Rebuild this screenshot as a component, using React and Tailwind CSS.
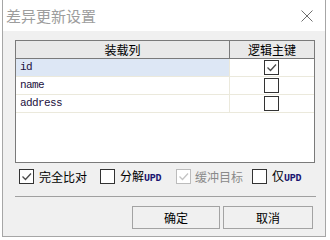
import React from "react";

const cjk = { fontFamily: '"Microsoft YaHei","Noto Sans CJK SC",sans-serif' };
const mono = { fontFamily: '"Liberation Mono","DejaVu Sans Mono",monospace' };

function Check({ color = "#4a4a4a" }) {
  return (
    <svg width="13" height="13" viewBox="0 0 13 13" className="block">
      <polyline points="2.5,6.5 5.5,9.5 11,3.5" fill="none" stroke={color} strokeWidth="1.3" />
    </svg>
  );
}

function Box({ checked, disabled, bg = "bg-white" }) {
  return (
    <div
      className={
        "w-[15px] h-[15px] border flex items-center justify-center shrink-0 " +
        (disabled ? "border-[#bcbcbc] " : "border-[#333333] ") +
        bg
      }
    >
      {checked && <Check color={disabled ? "#c4c4c4" : "#4a4a4a"} />}
    </div>
  );
}

function Row({ name, checked, selected }) {
  return (
    <div className="h-[18px] flex border-b border-[#ebe9dc]">
      <div
        className={
          "w-[214px] border-r border-[#ebe9dc] pl-[4px] flex items-center text-[11px] tracking-[-0.6px] text-[#1c1040] " +
          (selected ? "bg-[#dde7f5]" : "bg-white")
        }
        style={mono}
      >
        {name}
      </div>
      <div className="flex-1 flex items-center justify-center pr-[1px]">
        <Box checked={checked} />
      </div>
    </div>
  );
}

function Upd() {
  return (
    <span className="text-[10px] font-bold text-[#1a1470] tracking-[-0.2px] align-baseline" style={mono}>
      UPD
    </span>
  );
}

export default function App() {
  return (
    <div className="w-[330px] h-[240px] bg-white" style={cjk}>
      <div className="ml-[2px] w-[324px] h-[237px] border-x border-b border-[#a6a6a6] flex flex-col">
        <div className="h-[31px] bg-white flex items-center pl-[3px] shrink-0">
          <span className="text-[15px] text-[#9d9d9d] leading-none">差异更新设置</span>
          <svg width="12" height="12" viewBox="0 0 12 12" className="ml-auto mr-[12px]">
            <path d="M0.5 0.5 L11.5 11.5 M11.5 0.5 L0.5 11.5" stroke="#6e6e6e" strokeWidth="1" fill="none" />
          </svg>
        </div>
        <div className="flex-1 bg-[#f0f0f0] flex flex-col">
          <div className="mt-[9px] ml-[12px] w-[300px] h-[123px] border border-[#7a7a7a] bg-white flex flex-col">
            <div className="h-[18px] bg-[#e9e9e9] border-b border-[#7a7a7a] flex text-[12px] text-black leading-none">
              <div className="w-[214px] border-r border-[#7a7a7a] flex items-center justify-center">装载列</div>
              <div className="flex-1 flex items-center justify-center">逻辑主键</div>
            </div>
            <Row name="id" checked selected />
            <Row name="name" />
            <Row name="address" />
          </div>

          <div className="mt-[6px] h-[15px] flex items-center pl-[16px] text-[12px] leading-none">
            <div className="w-[81px] flex items-center">
              <Box checked />
              <span className="ml-[5px] text-black">完全比对</span>
            </div>
            <div className="w-[76px] flex items-center">
              <Box />
              <span className="ml-[5px] text-black leading-[15px]">
                分解<Upd />
              </span>
            </div>
            <div className="w-[76px] flex items-center">
              <Box checked disabled />
              <span className="ml-[4px] text-[#8a8a8a]">缓冲目标</span>
            </div>
            <div className="flex items-center">
              <Box />
              <span className="ml-[5px] text-black leading-[15px]">
                仅<Upd />
              </span>
            </div>
          </div>

          <div className="mt-[12px] ml-[12px] w-[301px] h-px bg-[#a0a0a0]" />

          <div className="mt-[9px] flex">
            <div className="ml-[129px] w-[88px] h-[23px] border border-[#a3a3a3] bg-[#f0f0f0] flex items-center justify-center text-[12px] text-black leading-none">
              确定
            </div>
            <div className="ml-[3px] w-[90px] h-[23px] border border-[#a3a3a3] bg-[#f0f0f0] flex items-center justify-center text-[12px] text-black leading-none">
              取消
            </div>
          </div>
        </div>
      </div>
    </div>
  );
}
